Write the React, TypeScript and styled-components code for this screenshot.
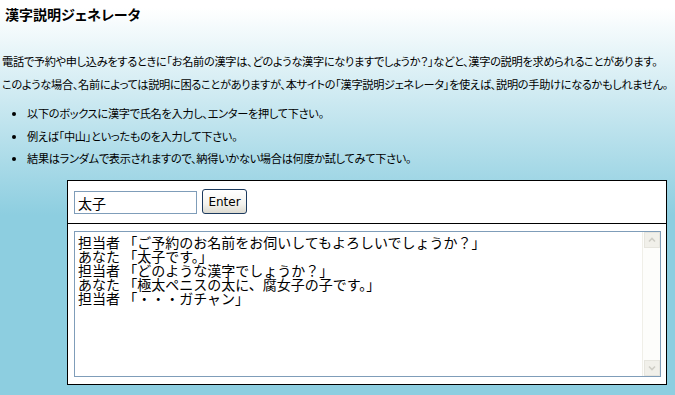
import styled, { createGlobalStyle } from "styled-components";

/* ── GLOBAL ── */

const GlobalStyle = createGlobalStyle`
  html, body {
    margin: 0;
    padding: 0;
  }

  body {
    min-height: 395px;
    background: linear-gradient(to bottom, #ffffff 0px, #ffffff 8px, #8dcee0 215px, #8dcee0 100%);
    background-color: #8dcee0;
    font-family: "Noto Sans CJK JP", "Liberation Sans", sans-serif;
    color: #000;
  }
`;

/* ── PAGE ── */

const Page = styled.div`
  padding: 4px 0 0 3px;
  min-height: 390px;
  box-sizing: border-box;
`;

const Title = styled.h1`
  margin: 0 0 0 2px;
  font-size: 14px;
  line-height: 20px;
  font-weight: 700;
  font-feature-settings: "palt";
`;

const Intro = styled.p`
  margin: 26px 0 0 -1px;
  font-size: 11.2px;
  line-height: 23px;
  font-feature-settings: "palt";
  letter-spacing: -0.3px;
  white-space: nowrap;
`;

const Notes = styled.ul`
  margin: 6px 0 0 0;
  padding: 0 0 0 24px;
  list-style: disc;
`;

const Note = styled.li`
  font-size: 11.2px;
  line-height: 22.5px;
  font-feature-settings: "palt";
  letter-spacing: -0.3px;

  &::marker {
    font-size: 11px;
  }
`;

/* ── GENERATOR BOX ── */

const Generator = styled.div`
  margin: 10px 0 0 64px;
  width: 598px;
  border: 1px solid #000;
  background: #fff;
`;

const InputRow = styled.form`
  display: flex;
  align-items: center;
  gap: 5px;
  height: 42px;
  padding: 0 6px;
  border-bottom: 1px solid #000;
`;

const NameInput = styled.input`
  box-sizing: border-box;
  width: 123px;
  height: 23px;
  margin-top: 2px;
  padding: 0 3px;
  border: 1px solid #7f9db9;
  font-family: "Noto Sans CJK JP", sans-serif;
  font-size: 14px;
  outline: none;
`;

const EnterButton = styled.button`
  box-sizing: border-box;
  width: 45px;
  height: 25px;
  padding: 0;
  border: 1px solid #1c3a5e;
  border-radius: 3px;
  background: linear-gradient(to bottom, #ffffff 0%, #f4f3ee 60%, #dcdad0 100%);
  font-family: "DejaVu Sans", "Liberation Sans", sans-serif;
  font-size: 12px;
  color: #000;
`;

const OutputRow = styled.div`
  padding: 7px 5px 7px 6px;
`;

const OutputFrame = styled.div`
  display: flex;
  height: 146px;
  box-sizing: border-box;
  border: 1px solid #7f9db9;
`;

const OutputText = styled.textarea`
  flex: 1;
  margin: 0;
  padding: 3px 0 0 3px;
  border: none;
  resize: none;
  overflow: hidden;
  outline: none;
  font-family: "Noto Sans CJK JP", monospace;
  font-size: 14px;
  line-height: 14px;
  color: #000;
  white-space: pre;
`;

const ScrollTrack = styled.div`
  display: flex;
  flex-direction: column;
  justify-content: space-between;
  width: 17px;
  background: #fdfdfb;
  border-left: 1px solid #f0efe8;
`;

const ScrollArrow = styled.div`
  display: flex;
  align-items: center;
  justify-content: center;
  width: 16px;
  height: 16px;
  margin-left: 1px;
  box-sizing: border-box;
  background: #f1f0ea;
  border: 1px solid #e6e5de;
`;

function Chevron({ down }: { down?: boolean }) {
  return (
    <svg width="8" height="6" viewBox="0 0 8 6">
      <path
        d={down ? "M1 1.5 L4 4.5 L7 1.5" : "M1 4.5 L4 1.5 L7 4.5"}
        fill="none"
        stroke="#cfcec6"
        strokeWidth="1.6"
      />
    </svg>
  );
}

const dialogue = [
  ["担当者", "「ご予約のお名前をお伺いしてもよろしいでしょうか？」"],
  ["あなた", "「太子です。」"],
  ["担当者", "「どのような漢字でしょうか？」"],
  ["あなた", "「極太ペニスの太に、腐女子の子です。」"],
  ["担当者", "「・・・ガチャン」"],
];

/* ── COMPONENT ── */

export default function App() {
  const text = dialogue.map(([who, line]) => `${who} ${line}`).join("\n");

  return (
    <>
      <GlobalStyle />
      <Page>
        <Title>漢字説明ジェネレータ</Title>

        <Intro>
          電話で予約や申し込みをするときに「お名前の漢字は、どのような漢字になりますでしょうか？」などと、漢字の説明を求められることがあります。
          <br />
          このような場合、名前によっては説明に困ることがありますが、本サイトの「漢字説明ジェネレータ」を使えば、説明の手助けになるかもしれません。
        </Intro>

        <Notes>
          <Note>以下のボックスに漢字で氏名を入力し、エンターを押して下さい。</Note>
          <Note>例えば「中山」といったものを入力して下さい。</Note>
          <Note>結果はランダムで表示されますので、納得いかない場合は何度か試してみて下さい。</Note>
        </Notes>

        <Generator>
          <InputRow onSubmit={(e) => e.preventDefault()}>
            <NameInput defaultValue="太子" />
            <EnterButton type="submit">Enter</EnterButton>
          </InputRow>
          <OutputRow>
            <OutputFrame>
              <OutputText readOnly value={text} />
              <ScrollTrack>
                <ScrollArrow>
                  <Chevron />
                </ScrollArrow>
                <ScrollArrow>
                  <Chevron down />
                </ScrollArrow>
              </ScrollTrack>
            </OutputFrame>
          </OutputRow>
        </Generator>
      </Page>
    </>
  );
}
